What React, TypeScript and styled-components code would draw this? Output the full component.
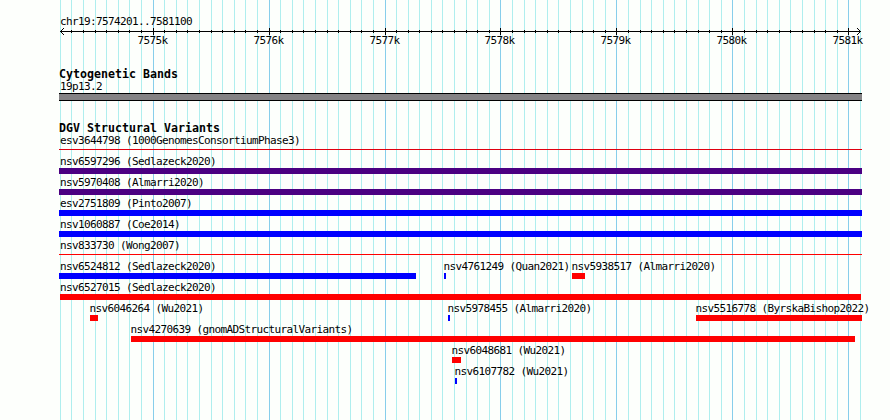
import styled, { createGlobalStyle } from "styled-components";

const REGION_START = 7574201;
const REGION_END = 7581100;
const LEFT = 60;
const RIGHT = 860;

interface IFeature {
  name: string;
  from: number;
  to: number;
  color: string;
  thin?: boolean;
}

const RED = "#ff0000";
const BLUE = "#0000ff";
const INDIGO = "#4b0082";

const rows: IFeature[][] = [
  [{ name: "esv3644798 (1000GenomesConsortiumPhase3)", from: 59, to: 862, color: "#e00010", thin: true }],
  [{ name: "nsv6597296 (Sedlazeck2020)", from: 59, to: 862, color: INDIGO }],
  [{ name: "nsv5970408 (Almarri2020)", from: 59, to: 862, color: INDIGO }],
  [{ name: "esv2751809 (Pinto2007)", from: 59, to: 862, color: BLUE }],
  [{ name: "nsv1060887 (Coe2014)", from: 59, to: 862, color: BLUE }],
  [{ name: "nsv833730 (Wong2007)", from: 59, to: 862, color: RED, thin: true }],
  [
    { name: "nsv6524812 (Sedlazeck2020)", from: 59, to: 416, color: BLUE },
    { name: "nsv4761249 (Quan2021)", from: 444, to: 446, color: BLUE },
    { name: "nsv5938517 (Almarri2020)", from: 572, to: 585, color: RED },
  ],
  [{ name: "nsv6527015 (Sedlazeck2020)", from: 60, to: 861, color: RED }],
  [
    { name: "nsv6046264 (Wu2021)", from: 90, to: 98, color: RED },
    { name: "nsv5978455 (Almarri2020)", from: 448, to: 450, color: BLUE },
    { name: "nsv5516778 (ByrskaBishop2022)", from: 696, to: 862, color: RED },
  ],
  [{ name: "nsv4270639 (gnomADStructuralVariants)", from: 131, to: 855, color: RED }],
  [{ name: "nsv6048681 (Wu2021)", from: 452, to: 461, color: RED }],
  [{ name: "nsv6107782 (Wu2021)", from: 455, to: 457, color: BLUE }],
];

function toX(position: number) {
  const scale = (RIGHT - LEFT) / (REGION_END - REGION_START + 1);
  return LEFT + Math.round((position - REGION_START) * scale);
}

const ticks: { x: number; major: boolean; label: string }[] = [];
for (let pos = 7574200; pos <= REGION_END; pos += 100) {
  ticks.push({ x: toX(pos), major: pos % 1000 === 0, label: `${pos / 1000}k` });
}
const majorTicks = ticks.filter((tick) => tick.major);

function Ruler() {
  return (
    <RulerSvg width="890" height="7" shapeRendering="crispEdges">
      <rect x={LEFT} y="3" width={RIGHT - LEFT + 1} height="1" />
      {ticks.slice(1, -1).map(({ x, major }) => (
        <rect key={x} x={x} y={major ? 0 : 2} width="1" height={major ? 7 : 3} />
      ))}
      {[1, 2, 3].map((d) => (
        <g key={d}>
          <rect x={LEFT + d} y={3 - d} width="1" height="1" />
          <rect x={LEFT + d} y={3 + d} width="1" height="1" />
          <rect x={RIGHT - d} y={3 - d} width="1" height="1" />
          <rect x={RIGHT - d} y={3 + d} width="1" height="1" />
        </g>
      ))}
    </RulerSvg>
  );
}

export default function App() {
  return (
    <>
      <GlobalStyle />
      <Browser>
        <Layer>
          {ticks.map(({ x, major }) => (
            <GridLine key={x} $x={x} $major={major} />
          ))}
        </Layer>
        <Tracks>
          <Label $x={60}>chr19:7574201..7581100</Label>
          <Ruler />
          <TickLabels>
            {majorTicks.map(({ x, label }) => (
              <TickLabel key={x} $x={x - 15.5}>
                {label}
              </TickLabel>
            ))}
          </TickLabels>
          <Track>
            <TrackTitle>Cytogenetic Bands</TrackTitle>
            <Label $x={60}>19p13.2</Label>
            <Band />
          </Track>
          <Track>
            <TrackTitle>DGV Structural Variants</TrackTitle>
            {rows.map((row) => (
              <Row key={row[0].name}>
                {row.map(({ name, from, to, color, thin }) => (
                  <Feature key={name}>
                    <Label $x={Math.max(LEFT, from - 0.6)}>{name}</Label>
                    <Bar $from={from} $to={to} $color={color} $thin={thin} />
                  </Feature>
                ))}
              </Row>
            ))}
          </Track>
        </Tracks>
      </Browser>
    </>
  );
}

const GlobalStyle = createGlobalStyle`
  body {
    margin: 0;
    background-color: #fdfffc;
  }
`;

const Browser = styled.div`
  display: grid;
  width: 890px;
  height: 420px;
  overflow: hidden;
  background-color: #fdfffc;
  color: #000;
  font-family: "DejaVu Sans Mono", monospace;
  font-size: 11px;
  line-height: 13px;
  white-space: pre;
`;

const Layer = styled.div`
  display: grid;
  grid-area: 1 / 1;
`;

const GridLine = styled.div<{ $x: number; $major: boolean }>`
  grid-area: 1 / 1;
  width: 1px;
  margin-left: ${({ $x }) => $x}px;
  background-color: ${({ $major }) => ($major ? "#87ceeb" : "#afeeee")};
`;

const Tracks = styled.div`
  grid-area: 1 / 1;
  display: flex;
  flex-direction: column;
  padding-top: 15px;
  z-index: 1;
`;

const Label = styled.div<{ $x: number }>`
  width: max-content;
  height: 13px;
  margin-left: ${({ $x }) => $x}px;
  letter-spacing: -0.622px;
`;

const RulerSvg = styled.svg`
  display: block;
  flex: none;
`;

const TickLabels = styled.div`
  display: grid;
  height: 13px;
  margin-top: -1px;
`;

const TickLabel = styled(Label)`
  grid-area: 1 / 1;
`;

const Track = styled.section`
  padding-top: 21px;
`;

const TrackTitle = styled.div`
  height: 12px;
  margin-left: 59px;
  font-size: 11.6px;
  font-weight: 700;
  letter-spacing: 0.016px;
`;

const Band = styled.div`
  box-sizing: border-box;
  width: 803px;
  height: 8px;
  margin-left: 59px;
  border: solid #000;
  border-width: 1px 0;
  background-color: #848284;
`;

const Row = styled.div`
  display: grid;
  height: 21px;
`;

const Feature = styled.div`
  grid-area: 1 / 1;
`;

const Bar = styled.div<{ $from: number; $to: number; $color: string; $thin?: boolean }>`
  width: ${({ $from, $to }) => $to - $from}px;
  height: ${({ $thin }) => ($thin ? 1 : 6)}px;
  margin-top: ${({ $thin }) => ($thin ? 2 : 0)}px;
  margin-left: ${({ $from }) => $from}px;
  background-color: ${({ $color }) => $color};
`;
